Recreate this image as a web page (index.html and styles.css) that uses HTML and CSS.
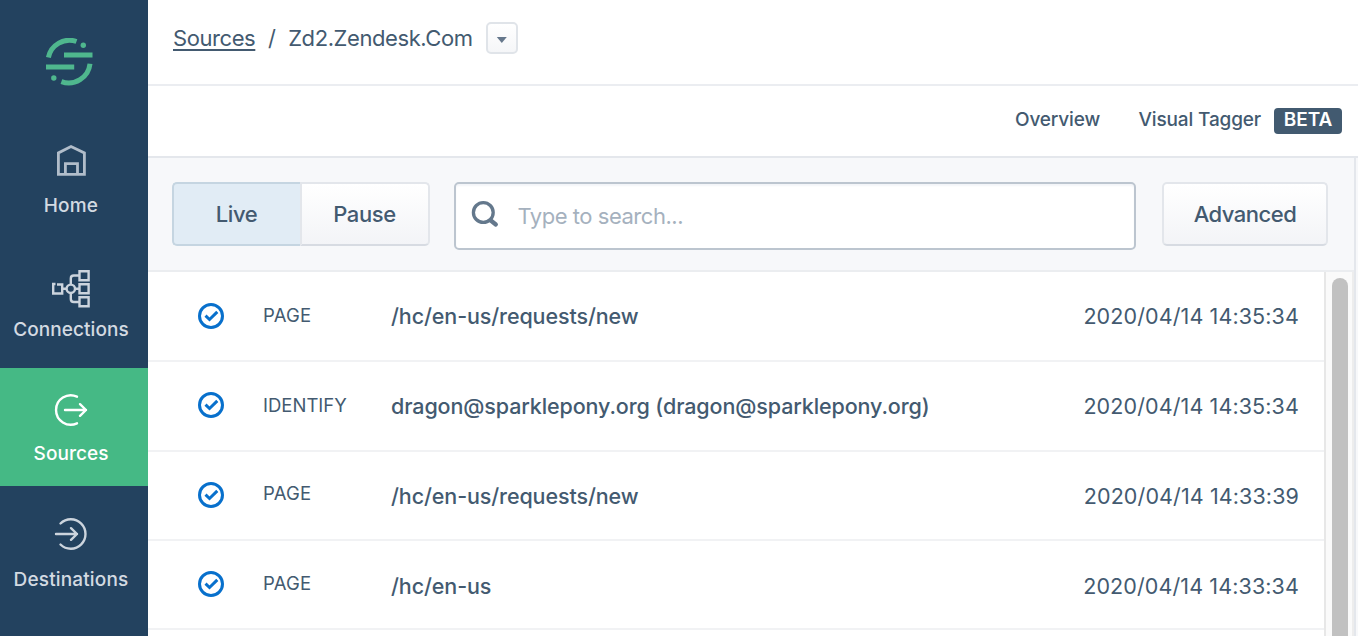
FILE: index.html
```html
<!DOCTYPE html>
<html lang="en">
<head>
<meta charset="utf-8">
<title>Source Debugger</title>
<link rel="stylesheet" href="styles.css">
</head>
<body>
<div class="app">
  <nav class="sidebar">
    <svg class="logo" width="48" height="50" viewBox="0 0 48 50" fill="none" stroke="#4fb78e" stroke-width="5">
      <path d="M2.400 19.500A21.500 21.500 0 0 1 30.500 3.500M44 25.700A21.500 21.500 0 0 1 15.400 43.700"/>
      <path d="M18 17H46.500M0 29H28.200"/>
      <circle cx="37.300" cy="7.200" r="2.700" fill="#4fb78e" stroke="none"/>
      <circle cx="7.800" cy="40" r="2.700" fill="#4fb78e" stroke="none"/>
    </svg>
    <a class="item">
      <svg class="icon" width="40" height="40" viewBox="0 0 40 40" fill="none" stroke="#b1bdca" stroke-width="2.800"><path d="M7.400 32.300V10.900L20 4.600L33.400 10.900V32.300ZM14.400 32V21.600H26.500V32"/></svg>
      <span class="label home">Home</span>
    </a>
    <a class="item">
      <svg class="icon" width="40" height="44" viewBox="0 -4 40 44" fill="none" stroke="#ccd4dd" stroke-width="2.400"><path d="M4.500 14H2.200V23.500H11.200V14.500H6M11.200 18.800H15.500M24.200 18.800H28.500M19.800 14.500V8.500Q19.800 5.500 22.800 5.500H28.500M19.800 23V29Q19.800 32 22.800 32H28.500"/><circle cx="19.800" cy="18.800" r="4.200"/><path d="M28.500 1.200H37.600V10.200H28.500ZM28.500 14.300H37.600V23.300H28.500ZM28.500 27.300H37.600V36.300H28.500Z"/></svg>
      <span class="label connections">Connections</span>
    </a>
    <a class="item active">
      <svg class="icon" width="40" height="40" viewBox="0 0 40 40" fill="none" stroke="#fff" stroke-width="2.400" stroke-linecap="round" stroke-linejoin="round"><path d="M26 6.700A14.700 14.700 0 1 0 26 33.300M14 20H35M29 14.200L35 20L29 25.800"/></svg>
      <span class="label sources">Sources</span>
    </a>
    <a class="item last">
      <svg class="icon" width="40" height="40" viewBox="0 0 40 40" fill="none" stroke="#ccd4dd" stroke-width="2.400" stroke-linecap="round" stroke-linejoin="round"><path d="M9.500 9.500A14.700 14.700 0 1 1 9.500 30.500M5 20H26M20 14.200L26 20L20 25.800"/></svg>
      <span class="label destinations">Destinations</span>
    </a>
  </nav>
  <main class="main">
    <header class="crumbs">
      <a class="crumb-link">Sources</a><span class="slash">/</span><span class="crumb-name">Zd2.Zendesk.Com</span>
      <button class="caret"><svg width="12" height="8" viewBox="0 0 12 8"><path d="M.800 1H10.800L5.800 7Z" fill="#66788c"/></svg></button>
    </header>
    <div class="tabs">
      <a class="tab overview">Overview</a><a class="tab tagger">Visual Tagger</a><span class="beta">BETA</span>
    </div>
    <div class="content">
      <section class="panel">
        <div class="toolbar">
          <div class="toggle"><button class="btn live"><span>Live</span></button><button class="btn pause"><span>Pause</span></button></div>
          <div class="search">
            <svg width="30" height="30" viewBox="0 0 30 30" fill="none" stroke="#64788c"><circle cx="13.300" cy="12.500" r="9.900" stroke-width="3.300"/><path d="M20.800 20.500L25.800 24.500" stroke-width="4.300" stroke-linecap="round"/></svg>
            <span class="placeholder">Type to search...</span>
          </div>
          <button class="btn advanced"><span>Advanced</span></button>
        </div>
        <div class="events">
          <div class="rows">
            <div class="row"><svg class="check" width="26" height="26" viewBox="0 0 26 26" fill="none" stroke="#0870cc" stroke-width="3"><circle cx="13" cy="13" r="11.500"/><path d="M7.500 12.700L11.500 16.500L19.300 8.900"/></svg><span class="type page">PAGE</span><span class="event requests">/hc/en-us/requests/new</span><time class="time">2020/04/14 14:35:34</time></div>
            <div class="row"><svg class="check" width="26" height="26" viewBox="0 0 26 26" fill="none" stroke="#0870cc" stroke-width="3"><circle cx="13" cy="13" r="11.500"/><path d="M7.500 12.700L11.500 16.500L19.300 8.900"/></svg><span class="type identify">IDENTIFY</span><span class="event email">dragon@sparklepony.org (dragon@sparklepony.org)</span><time class="time">2020/04/14 14:35:34</time></div>
            <div class="row"><svg class="check" width="26" height="26" viewBox="0 0 26 26" fill="none" stroke="#0870cc" stroke-width="3"><circle cx="13" cy="13" r="11.500"/><path d="M7.500 12.700L11.500 16.500L19.300 8.900"/></svg><span class="type page">PAGE</span><span class="event requests">/hc/en-us/requests/new</span><time class="time">2020/04/14 14:33:39</time></div>
            <div class="row"><svg class="check" width="26" height="26" viewBox="0 0 26 26" fill="none" stroke="#0870cc" stroke-width="3"><circle cx="13" cy="13" r="11.500"/><path d="M7.500 12.700L11.500 16.500L19.300 8.900"/></svg><span class="type page">PAGE</span><span class="event root">/hc/en-us</span><time class="time">2020/04/14 14:33:34</time></div>
          </div>
          <div class="scroll"><div class="thumb"></div></div>
        </div>
      </section>
    </div>
  </main>
</div>
</body>
</html>
```
FILE: styles.css
```css
* { box-sizing: border-box; }
body { margin: 0; overflow: hidden; background: #fff; color: #435a70; font-family: Inter, "Liberation Sans", sans-serif; }
svg { display: block; flex: none; }
button { font: inherit; color: inherit; padding: 0; margin: 0; }
.app { display: flex; width: 1358px; height: 636px; overflow: hidden; }
.sidebar { width: 148px; flex: none; background: #23425f; color: #d3dae2; display: flex; flex-direction: column; }
.logo { margin: 38px 0 32px 46px; }
.item { height: 124px; flex: none; display: flex; flex-direction: column; align-items: center; padding: 22px 6px 0 0; }
.icon { flex: none; }
.label { font-size: 19px; line-height: 24px; font-weight: 500; margin-top: 12px; white-space: nowrap; letter-spacing: .05px; }
.home { letter-spacing: .2px; }
.connections { margin-top: 8px; }
.item.active { height: 118px; background: #45b985; color: #fff; }
.item.last { margin-top: 6px; }
.item.last .label { margin-top: 14px; letter-spacing: .15px; }
.main { flex: 1; min-width: 0; display: flex; flex-direction: column; }
.crumbs { height: 86px; flex: none; display: flex; padding: 22px 0 0 25px; border-bottom: 2px solid #ebedf1; font-size: 22px; line-height: 32px; white-space: nowrap; letter-spacing: -.42px; }
.crumb-link { text-decoration: underline; text-decoration-thickness: 2px; text-underline-offset: 3px; }
.slash { margin: 0 12.700px; }
.caret { margin-left: 13.400px; width: 32px; height: 32px; border: 2px solid #e0e4e9; border-radius: 5px; background: linear-gradient(#fff, #f5f6f8); display: flex; align-items: center; justify-content: center; padding-top: 3px; }
.tabs { height: 72px; flex: none; display: flex; justify-content: flex-end; padding: 22px 16px 0 0; border-bottom: 2px solid #e4e7ec; font-size: 19px; line-height: 24px; font-weight: 500; white-space: nowrap; letter-spacing: -.15px; }
.tagger { margin-left: 38.500px; }
.beta { margin-left: 13px; width: 68px; height: 26px; background: #425a70; color: #fff; border-radius: 4px; text-align: center; font-weight: 600; letter-spacing: 0; }
.content { flex: 1; background: #f7f8fa; }
.panel { width: 1208px; height: 478px; border-right: 2px solid #e4e7ec; display: flex; flex-direction: column; }
.toolbar { height: 114px; flex: none; padding: 24px 26px 0 24px; display: flex; border-bottom: 2px solid #ebedf0; }
.toggle { display: flex; }
.btn { height: 64px; border: 2px solid #e3e6eb; border-bottom-color: #d7dbe2; background: linear-gradient(#fff, #f3f4f7); font-size: 22px; font-weight: 500; border-radius: 5px; letter-spacing: -.4px; }
.live { width: 128px; background: #e1ecf5; border-color: #c5d5e1; border-right-width: 0; border-radius: 5px 0 0 5px; padding-right: 1px; }
.pause { width: 130px; border-radius: 0 5px 5px 0; letter-spacing: -.4px; padding-right: 1px; }
.search { margin-left: 24px; width: 682px; height: 68px; border: 2px solid #bcc5cf; border-radius: 5px; background: #fff; box-shadow: inset 0 2px 2px #f3f5f8; display: flex; align-items: center; padding-left: 14px; }
.search svg { margin-bottom: 2px; }
.placeholder { margin-left: 17.500px; font-size: 22px; line-height: 32px; color: #a5b1be; letter-spacing: -.47px; }
.advanced { margin-left: 26px; width: 166px; letter-spacing: -.5px; }
.events { flex: 1; display: flex; background: #fff; }
.rows { width: 1176px; }
.row { height: 90px; border-bottom: 2px solid #f1f2f4; display: flex; align-items: flex-start; padding: 31px 26px 0 50px; white-space: nowrap; }
.row:nth-child(n+3) { height: 89px; }
.row:nth-child(n+2) .check { margin-top: -1px; }
.row .type { margin-top: -1px; }
.row:nth-child(3) .type { margin-top: -3px; }
.row:nth-child(4) .type { margin-top: -2px; }
.row .event, .row .time { margin-top: -1px; }
.row:nth-child(4) .event, .row:nth-child(4) .time { margin-top: 0; }
.type { width: 128px; margin-left: 39px; font-size: 18.500px; line-height: 26px; }
.page { letter-spacing: .2px; }
.event { font-size: 21.500px; line-height: 28px; font-weight: 500; letter-spacing: -.11px; }
.time { margin-left: auto; font-size: 21.500px; line-height: 28px; letter-spacing: .11px; margin-right: -1px; }
.scroll { width: 30px; border-left: 2px solid #e7e7e7; border-right: 2px solid #ededed; background: #fafafa; padding: 6px 0 0 6px; }
.thumb { width: 16px; height: 400px; border-radius: 8px; background: #c1c1c1; }
```
